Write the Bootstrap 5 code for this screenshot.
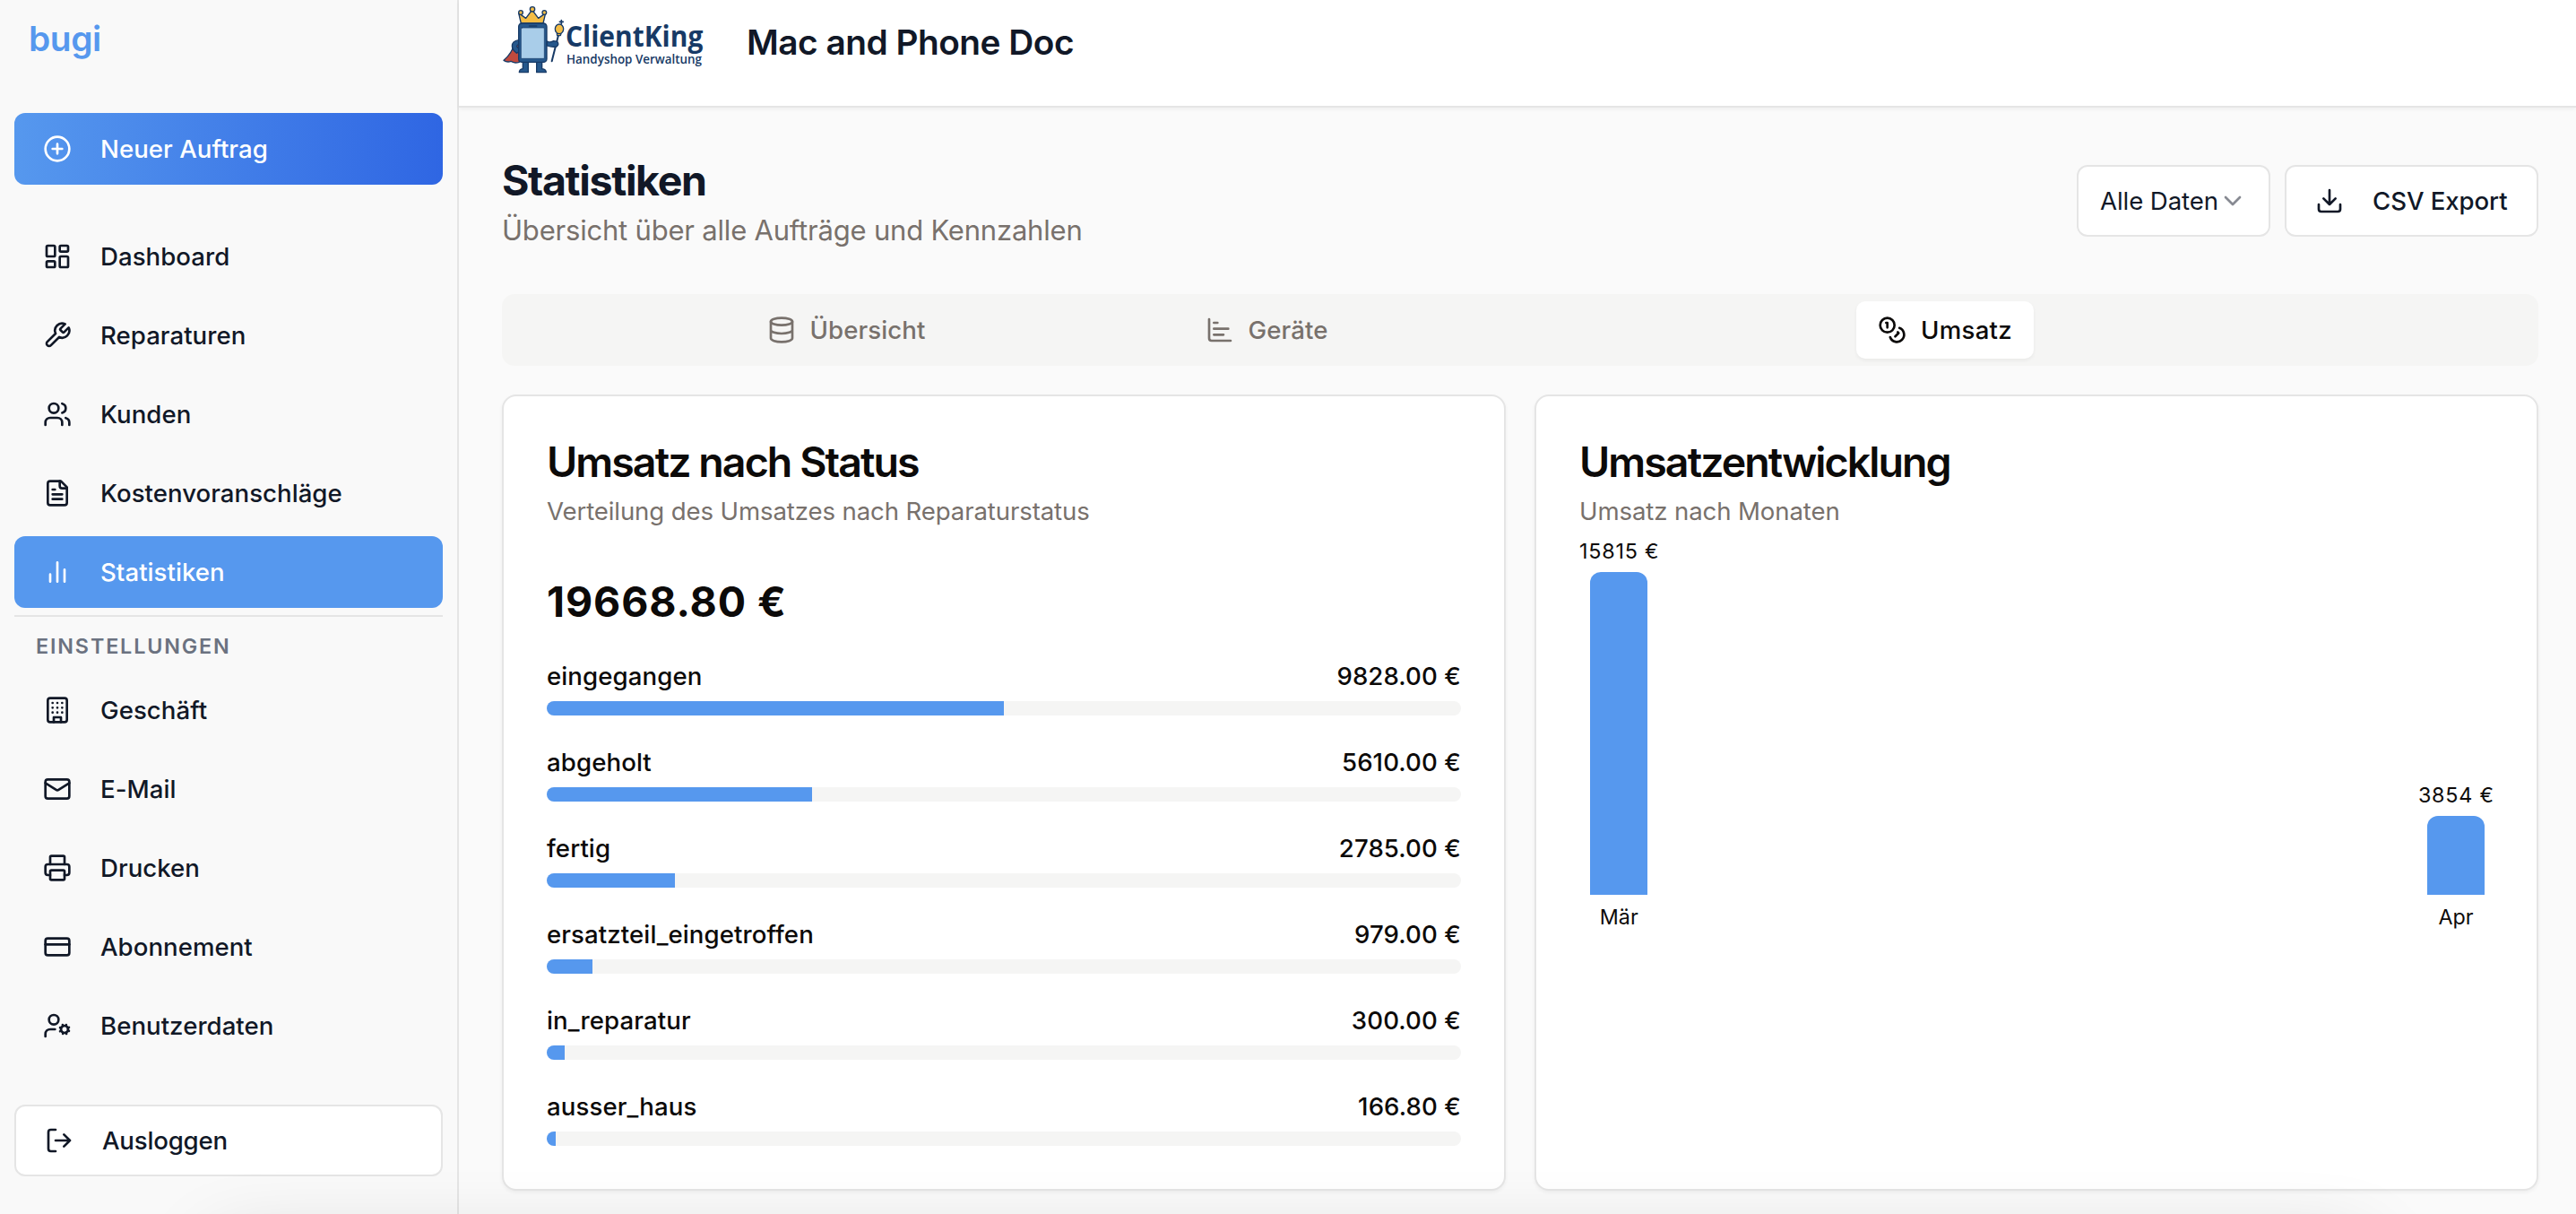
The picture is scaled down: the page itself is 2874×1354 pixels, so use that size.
<!DOCTYPE html>
<html lang="de">
<head>
<meta charset="utf-8">
<meta name="viewport" content="width=device-width, initial-scale=1">
<title>Statistiken – ClientKing</title>
<link href="https://cdn.jsdelivr.net/npm/bootstrap@5.3.0/dist/css/bootstrap.min.css" rel="stylesheet">
<style>
  :root { --brand: #5698ee; --line: #e5e5e5; --ink: #111827; --soft: #78716c; --tint: #f5f5f4; }
  body { font-family: Inter, "Liberation Sans", sans-serif; font-size: 27.6px; line-height: 40px; color: var(--ink); background: #fafafa; overflow: hidden; }
  .ico { width: 32px; height: 32px; flex: none; fill: none; stroke: currentColor; stroke-width: 2; stroke-linecap: round; stroke-linejoin: round; }
  .app { height: 1354px; }

  .side { width: 512px; flex: none; padding: 0 16px; background: #f9f9f9; border-right: 2px solid var(--line); }
  .brand-name { font-size: 38.8px; font-weight: 600; line-height: 86px; height: 126px; padding-left: 16px; letter-spacing: -.4px; color: var(--brand); }
  .side .nav-link { height: 80px; padding: 0 32px; gap: 32px; border-radius: 12px; font-size: 27.6px; line-height: 40px; font-weight: 500; letter-spacing: .04px; color: var(--ink); }
  .side .nav-link.active { background: var(--brand); color: #fff; }
  .side .btn-new { background: linear-gradient(90deg, #5698ee, #2f66e3); color: #fff; }
  .side .btn-out { background: #fff; border: 2px solid var(--line); letter-spacing: -.2px; margin-top: 48px; }
  .side-label { border-top: 2px solid var(--line); margin-top: 8px; height: 66px; padding-left: 24px; font-size: 23.3px; font-weight: 600; line-height: 66px; letter-spacing: 1.87px; color: #6b7280; }

  .topbar { height: 120px; padding-left: 48px; background: #fff; border-bottom: 2px solid var(--line); box-shadow: 0 2px 4px rgba(0,0,0,.05); }
  .logo { width: 230px; height: 100px; flex: none; overflow: visible; }
  .shop { margin-left: 43px; font-size: 38.8px; font-weight: 600; line-height: 94px; letter-spacing: -.5px; }

  .content { padding: 48px 42px 0 48px; }
  .page-head { height: 112px; }
  .page-title { font-size: 46.5px; font-weight: 700; line-height: 64px; letter-spacing: -1.36px; padding-top: 1px; }
  .page-sub { font-size: 31px; line-height: 48px; letter-spacing: -.2px; color: var(--soft); }
  .ctl { height: 80px; background: #fff; border: 2px solid var(--line); border-radius: 12px; letter-spacing: -.08px; white-space: nowrap; }
  .ctl-select { width: 216px; padding: 0 24px; }
  .ctl-export { width: 283px; padding: 0 32px; gap: 32px; font-weight: 500; }

  .tabs { height: 80px; margin-top: 48px; padding: 8px; border-radius: 14px; background: var(--tint); color: var(--soft); display: grid; grid-template-columns: 752px 186px 1fr; justify-items: center; }
  .tab-item { height: 64px; padding: 0 24px; gap: 16px; border-radius: 10px; font-weight: 500; letter-spacing: .1px; display: flex; align-items: center; }
  .tab-item.on { background: #fff; color: #0c0a09; box-shadow: 0 2px 4px rgba(0,0,0,.05); margin-left: 10px; letter-spacing: .25px; }

  .panels { margin-top: 32px; gap: 32px; color: #0c0a09; }
  .panel { flex: 1 1 0; min-width: 0; height: 888px; padding: 48px; background: #fff; border: 2px solid var(--line); border-radius: 16px; box-shadow: 0 2px 4px rgba(0,0,0,.05); }
  .panel-title { font-size: 46.5px; font-weight: 600; line-height: 50px; letter-spacing: -1.92px; }
  .panel-sub { margin-top: 10px; letter-spacing: -.12px; color: var(--soft); }
  .total { margin: 49px 0 31px; font-size: 46.5px; font-weight: 700; line-height: 64px; letter-spacing: .9px; }
  .stat { margin-bottom: 32px; font-weight: 500; letter-spacing: .1px; }
  .stat .progress { height: 16px; margin-top: 8px; border-radius: 8px; background: var(--tint); }
  .stat .progress-bar { background: var(--brand); }

  .chart { margin-top: 8px; height: 442px; font-size: 23.3px; line-height: 34px; }
  .col-bar { width: 64px; margin: 6px 0 8px; border-radius: 12px 12px 0 0; background: var(--brand); }
  .col-value { letter-spacing: .8px; margin-right: -.8px; }

  .edge-shade { position: fixed; left: 0; right: 0; bottom: 0; height: 100px; overflow: hidden; pointer-events: none; }
  .edge-shade::after { content: ""; display: block; height: 60px; margin: 140px 235px 0 240px; box-shadow: 0 0 90px rgba(0,0,0,.2); }
</style>
</head>
<body>
<div class="app d-flex">
  <aside class="side">
    <div class="brand-name">bugi</div>
    <a class="nav-link btn-new d-flex align-items-center" href="#"><svg class="ico" viewBox="0 0 24 24"><circle cx="12" cy="12" r="10"/><path d="M8 12h8M12 8v8"/></svg>Neuer Auftrag</a>
    <nav class="nav flex-column flex-nowrap gap-2" style="margin-top:40px">
      <a class="nav-link d-flex align-items-center" href="#"><svg class="ico" viewBox="0 0 24 24"><rect x="3" y="3" width="7" height="9" rx="1"/><rect x="14" y="3" width="7" height="5" rx="1"/><rect x="14" y="12" width="7" height="9" rx="1"/><rect x="3" y="16" width="7" height="5" rx="1"/></svg>Dashboard</a>
      <a class="nav-link d-flex align-items-center" href="#"><svg class="ico" viewBox="0 0 24 24"><path d="M14.7 6.3a1 1 0 0 0 0 1.4l1.6 1.6a1 1 0 0 0 1.4 0l3.77-3.77a6 6 0 0 1-7.94 7.94l-6.91 6.91a2.12 2.12 0 0 1-3-3l6.91-6.91a6 6 0 0 1 7.94-7.94l-3.76 3.76z"/></svg>Reparaturen</a>
      <a class="nav-link d-flex align-items-center" href="#"><svg class="ico" viewBox="0 0 24 24"><path d="M16 21v-2a4 4 0 0 0-4-4H6a4 4 0 0 0-4 4v2"/><circle cx="9" cy="7" r="4"/><path d="M22 21v-2a4 4 0 0 0-3-3.87M16 3.13a4 4 0 0 1 0 7.75"/></svg>Kunden</a>
      <a class="nav-link d-flex align-items-center" href="#"><svg class="ico" viewBox="0 0 24 24"><path d="M15 2H6a2 2 0 0 0-2 2v16a2 2 0 0 0 2 2h12a2 2 0 0 0 2-2V7Z"/><path d="M14 2v4a2 2 0 0 0 2 2h4M10 9H8M16 13H8M16 17H8"/></svg>Kostenvoranschläge</a>
      <a class="nav-link active d-flex align-items-center" href="#"><svg class="ico" viewBox="0 0 24 24"><path d="M18 20V10M12 20V4M6 20v-6"/></svg>Statistiken</a>
    </nav>
    <div class="side-label">EINSTELLUNGEN</div>
    <nav class="nav flex-column flex-nowrap gap-2">
      <a class="nav-link d-flex align-items-center" href="#"><svg class="ico" viewBox="0 0 24 24"><rect x="4" y="2" width="16" height="20" rx="2"/><path d="M9 22v-4h6v4M8 6h.01M16 6h.01M12 6h.01M12 10h.01M12 14h.01M16 10h.01M16 14h.01M8 10h.01M8 14h.01"/></svg>Geschäft</a>
      <a class="nav-link d-flex align-items-center" href="#"><svg class="ico" viewBox="0 0 24 24"><rect x="2" y="4" width="20" height="16" rx="2"/><path d="m22 7-8.97 5.7a1.94 1.94 0 0 1-2.06 0L2 7"/></svg>E-Mail</a>
      <a class="nav-link d-flex align-items-center" href="#"><svg class="ico" viewBox="0 0 24 24"><path d="M6 18H4a2 2 0 0 1-2-2v-5a2 2 0 0 1 2-2h16a2 2 0 0 1 2 2v5a2 2 0 0 1-2 2h-2"/><path d="M6 9V3a1 1 0 0 1 1-1h10a1 1 0 0 1 1 1v6"/><rect x="6" y="14" width="12" height="8" rx="1"/></svg>Drucken</a>
      <a class="nav-link d-flex align-items-center" href="#"><svg class="ico" viewBox="0 0 24 24"><rect x="2" y="5" width="20" height="14" rx="2"/><path d="M2 10h20"/></svg>Abonnement</a>
      <a class="nav-link d-flex align-items-center" href="#"><svg class="ico" viewBox="0 0 24 24"><circle cx="18" cy="15" r="3"/><circle cx="9" cy="7" r="4"/><path d="M10 15H6a4 4 0 0 0-4 4v2M21.7 16.4l-.9-.3M15.2 13.9l-.9-.3M16.6 18.7l.3-.9M19.1 12.2l.3-.9M19.6 18.7l-.4-1M16.8 12.3l-.4-1M14.3 16.6l1-.4M20.7 13.8l1-.4"/></svg>Benutzerdaten</a>
    </nav>
    <a class="nav-link btn-out d-flex align-items-center" href="#"><svg class="ico" viewBox="0 0 24 24"><path d="M9 21H5a2 2 0 0 1-2-2V5a2 2 0 0 1 2-2h4M16 17l5-5-5-5M21 12H9"/></svg>Ausloggen</a>
  </aside>

  <div class="flex-grow-1">
    <header class="topbar d-flex align-items-start">
      <svg class="logo" viewBox="30 0 690 300" role="img" aria-label="ClientKing">
        <g stroke="#173a66" stroke-width="4" stroke-linejoin="round" stroke-linecap="round">
          <path d="M74 142C66 170 52 188 36 202q12 8 24 3q10 8 28 3V150z" fill="#c04a3e"/>
          <path d="M86 134q-22 4-22 20q0 14 16 24l8-6V164l-8-8q0-6 8-8z" fill="#26588c"/>
          <path d="M100 206v24q-12 2-12 12h30v-36zM146 206v36h32q0-10-14-12v-24z" fill="#26588c"/>
          <path d="M94 78 86 44l24 17 21-28 21 28 24-17-8 34z" fill="#f4bd45"/>
          <circle cx="93" cy="42" r="7" fill="#f4bd45"/><circle cx="132" cy="31" r="8" fill="#f4bd45"/><circle cx="172" cy="42" r="7" fill="#f4bd45"/>
          <rect x="86" y="78" width="94" height="130" rx="11" fill="#26588c"/>
          <rect x="94" y="93" width="78" height="103" rx="3" fill="#a9cde9" stroke-width="2"/>
          <path d="M122 87h24" stroke-width="5"/>
          <path d="M197 205 219 118" stroke-width="6"/>
          <path d="M181 138q12 6 22-1l12 2q8 10-2 17-16 3-32-3z" fill="#26588c"/>
          <path d="M214 112h14l-2 7h-11z" fill="#f4bd45"/>
          <ellipse cx="222" cy="97" rx="14" ry="16" fill="#f4bd45"/>
          <path d="M229 80V68M223 73h12" stroke-width="5"/>
        </g>
        <g fill="#173a66" font-family="'Open Sans','Noto Sans',sans-serif">
          <text x="243" y="156" font-size="97" font-weight="700" textLength="460" lengthAdjust="spacingAndGlyphs">ClientKing</text>
          <text x="246" y="213" font-size="44" font-weight="600" textLength="453" lengthAdjust="spacingAndGlyphs">Handyshop Verwaltung</text>
        </g>
      </svg>
      <div class="shop">Mac and Phone Doc</div>
    </header>

    <main class="content">
      <div class="page-head d-flex justify-content-between align-items-center">
        <div>
          <h1 class="page-title mb-0">Statistiken</h1>
          <div class="page-sub">Übersicht über alle Aufträge und Kennzahlen</div>
        </div>
        <div class="d-flex gap-3">
          <div class="ctl ctl-select d-flex align-items-center justify-content-between"><span>Alle Daten</span><svg class="ico opacity-50" viewBox="0 0 24 24"><path d="m6 9 6 6 6-6"/></svg></div>
          <div class="ctl ctl-export d-flex align-items-center"><svg class="ico" viewBox="0 0 24 24"><path d="M21 15v4a2 2 0 0 1-2 2H5a2 2 0 0 1-2-2v-4M7 10l5 5 5-5M12 15V3"/></svg>CSV Export</div>
        </div>
      </div>

      <div class="tabs">
        <div class="tab-item"><svg class="ico" viewBox="0 0 24 24"><ellipse cx="12" cy="5" rx="9" ry="3"/><path d="M3 5V19A9 3 0 0 0 21 19V5M3 12A9 3 0 0 0 21 12"/></svg>Übersicht</div>
        <div class="tab-item"><svg class="ico" viewBox="0 0 24 24"><path d="M3 3v16a2 2 0 0 0 2 2h16M7 16h8M7 11h12M7 6h3"/></svg>Geräte</div>
        <div class="tab-item on"><svg class="ico" viewBox="0 0 24 24"><circle cx="8" cy="8" r="6"/><path d="M18.09 10.37A6 6 0 1 1 10.34 18M7 6h1v4M16.71 13.88l.7.71-2.82 2.82"/></svg>Umsatz</div>
      </div>

      <div class="panels d-flex">
        <section class="panel">
          <h2 class="panel-title mb-0">Umsatz nach Status</h2>
          <div class="panel-sub">Verteilung des Umsatzes nach Reparaturstatus</div>
          <div class="total">19668.80 €</div>
          <div class="stat"><div class="d-flex justify-content-between"><span>eingegangen</span><span>9828.00 €</span></div><div class="progress"><div class="progress-bar" style="width:50%"></div></div></div>
          <div class="stat"><div class="d-flex justify-content-between"><span>abgeholt</span><span>5610.00 €</span></div><div class="progress"><div class="progress-bar" style="width:29%"></div></div></div>
          <div class="stat"><div class="d-flex justify-content-between"><span>fertig</span><span>2785.00 €</span></div><div class="progress"><div class="progress-bar" style="width:14%"></div></div></div>
          <div class="stat"><div class="d-flex justify-content-between"><span>ersatzteil_eingetroffen</span><span>979.00 €</span></div><div class="progress"><div class="progress-bar" style="width:5%"></div></div></div>
          <div class="stat"><div class="d-flex justify-content-between"><span>in_reparatur</span><span>300.00 €</span></div><div class="progress"><div class="progress-bar" style="width:2%"></div></div></div>
          <div class="stat mb-0"><div class="d-flex justify-content-between"><span>ausser_haus</span><span>166.80 €</span></div><div class="progress"><div class="progress-bar" style="width:1%"></div></div></div>
        </section>
        <section class="panel">
          <h2 class="panel-title mb-0">Umsatzentwicklung</h2>
          <div class="panel-sub">Umsatz nach Monaten</div>
          <div class="chart d-flex justify-content-between align-items-end">
            <div class="d-flex flex-column align-items-center"><span class="col-value">15815 €</span><div class="col-bar" style="height:360px"></div><span>Mär</span></div>
            <div class="d-flex flex-column align-items-center"><span class="col-value">3854 €</span><div class="col-bar" style="height:88px"></div><span>Apr</span></div>
          </div>
        </section>
      </div>
    </main>
  </div>
</div>
<div class="edge-shade"></div>
<script src="https://cdn.jsdelivr.net/npm/bootstrap@5.3.0/dist/js/bootstrap.bundle.min.js"></script>
</body>
</html>
